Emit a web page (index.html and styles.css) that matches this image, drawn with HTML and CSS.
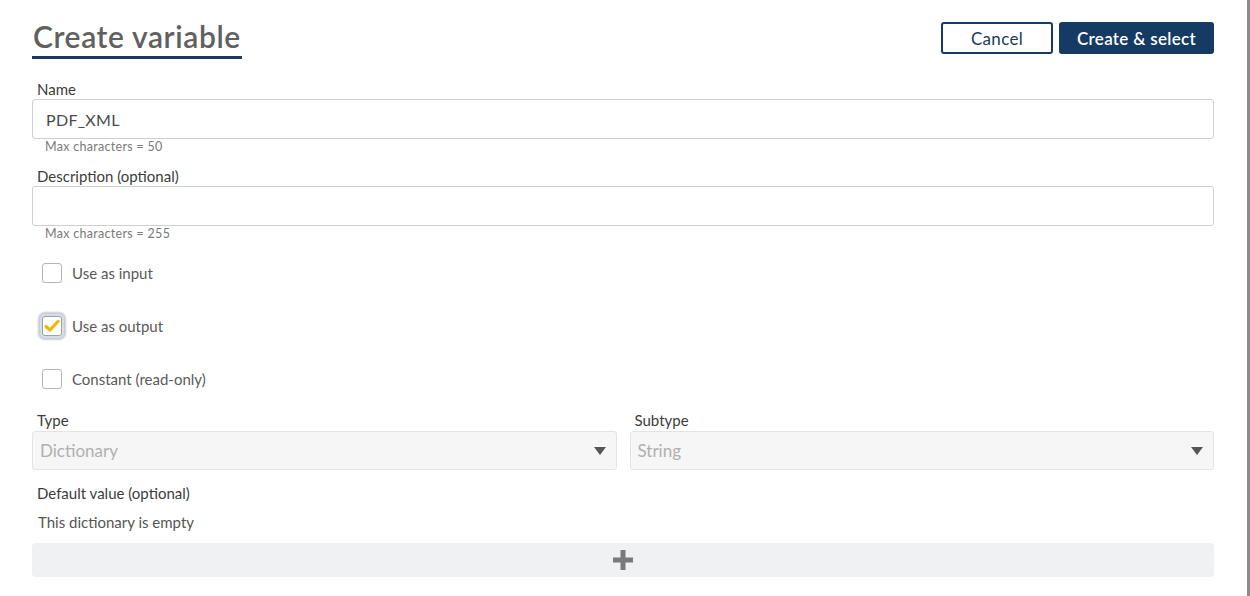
FILE: index.html
```html
<!DOCTYPE html>
<html lang="en">
<head>
    <meta charset="UTF-8">
    <meta name="viewport" content="width=device-width, initial-scale=1.0">
    <title>Create variable</title>
    <link rel="stylesheet" href="styles.css">
</head>
<body>
    <div class="modal">
        <div class="header">
            <h1>Create variable</h1>
            <div class="actions">
                <button type="button" class="btn btn-cancel">Cancel</button>
                <button type="button" class="btn btn-primary">Create &amp; select</button>
            </div>
        </div>

        <div class="field">
            <label>Name</label>
            <input type="text" class="text-input" value="PDF_XML">
            <div class="hint">Max characters = 50</div>
        </div>

        <div class="field">
            <label>Description (optional)</label>
            <input type="text" class="text-input">
            <div class="hint">Max characters = 255</div>
        </div>

        <div class="checks">
            <div class="check-row">
                <span class="box"></span>
                <span>Use as input</span>
            </div>
            <div class="check-row">
                <span class="box checked focused">
                    <svg width="16" height="14" viewBox="0 0 16 14"><path d="M2 7.5 L6 11 L14 2.5" fill="none" stroke="#f5b400" stroke-width="3.2" stroke-linecap="round" stroke-linejoin="round"/></svg>
                </span>
                <span>Use as output</span>
            </div>
            <div class="check-row">
                <span class="box"></span>
                <span>Constant (read-only)</span>
            </div>
        </div>

        <div class="type-row">
            <div class="col">
                <label>Type</label>
                <div class="select">
                    <span>Dictionary</span>
                    <span class="caret"></span>
                </div>
            </div>
            <div class="col">
                <label>Subtype</label>
                <div class="select">
                    <span>String</span>
                    <span class="caret"></span>
                </div>
            </div>
        </div>

        <label class="default-label">Default value (optional)</label>
        <div class="empty">This dictionary is empty</div>
        <div class="add-bar">
            <svg width="20" height="20" viewBox="0 0 20 20"><rect x="7.5" y="0" width="5" height="20" fill="#7a7a7a"/><rect x="0" y="7.5" width="20" height="5" fill="#7a7a7a"/></svg>
        </div>
    </div>
    <div class="edge"></div>
</body>
</html>
```

FILE: styles.css
```css
html, body {
    margin: 0;
    height: 100%;
}
body {
    font-family: Lato, "Open Sans", sans-serif;
    background: #fff;
    color: #444;
    display: flex;
    overflow: hidden;
}
.modal {
    flex: 1;
    padding: 0 33px 0 32px;
}
.edge {
    width: 3px;
    background: #8c8c8c;
}
.header {
    display: flex;
    justify-content: space-between;
    align-items: flex-start;
    height: 79px;
}
h1 {
    margin: 17px 0 0 0;
    padding: 0 1px 1px 1px;
    font-size: 30px;
    font-weight: 600;
    letter-spacing: 0.6px;
    color: #606060;
    line-height: 38px;
    border-bottom: 3px solid #163c66;
}
.actions {
    display: flex;
    gap: 6px;
    margin-top: 22px;
}
.btn {
    font-family: inherit;
    font-size: 17px;
    height: 32px;
    border-radius: 3px;
    cursor: pointer;
    letter-spacing: 0.3px;
}
.btn-cancel {
    width: 112px;
    background: #fff;
    color: #173a64;
    border: 2px solid #173a64;
}
.btn-primary {
    width: 155px;
    background: #153a64;
    color: #fff;
    border: none;
    font-weight: 600;
}
label {
    display: block;
    font-size: 15px;
    color: #3c3c3c;
    padding-left: 5px;
    line-height: 20px;
}
.text-input {
    display: block;
    width: 100%;
    box-sizing: border-box;
    height: 40px;
    border: 1px solid #cfcfcf;
    border-radius: 3px;
    padding: 0 13px;
    font-family: inherit;
    font-size: 16px;
    letter-spacing: 0.3px;
    color: #4a4a4a;
}
.hint {
    font-size: 12.5px;
    letter-spacing: 0.3px;
    color: #7a7a7a;
    padding-left: 13px;
    margin-top: 1px;
    height: 26px;
    line-height: 14px;
}
.checks {
    padding: 10px 0 0 10px;
}
.check-row {
    display: flex;
    align-items: center;
    gap: 10px;
    height: 20px;
    margin-bottom: 33px;
    font-size: 15px;
    color: #5a5a5a;
}
.box {
    width: 18px;
    height: 18px;
    border: 1px solid #b5b5b5;
    border-radius: 3px;
    background: #fff;
    display: flex;
    align-items: center;
    justify-content: center;
}
.box.focused {
    box-shadow: 0 0 0 2px #d8dde5, 0 0 2px 4px #c5ccd6;
    border-color: #9aa3ad;
}
.type-row {
    display: flex;
    gap: 13px;
    margin-top: -12px;
}
.col {
    flex: 1;
}
.col label {
    margin-bottom: 1px;
}
.select {
    height: 39px;
    box-sizing: border-box;
    border: 1px solid #e4e4e4;
    border-radius: 3px;
    background: #f6f6f6;
    display: flex;
    align-items: center;
    justify-content: space-between;
    padding: 0 10px 0 7px;
    font-size: 17px;
    color: #b0b0b0;
}
.caret {
    width: 0;
    height: 0;
    border-left: 6px solid transparent;
    border-right: 6px solid transparent;
    border-top: 8px solid #555;
}
.default-label {
    margin-top: 13px;
}
.empty {
    font-size: 15px;
    color: #555;
    padding-left: 6px;
    margin-top: 9px;
    line-height: 20px;
}
.add-bar {
    margin-top: 11px;
    height: 34px;
    background: #f0f1f3;
    border-radius: 4px;
    display: flex;
    align-items: center;
    justify-content: center;
}
```
